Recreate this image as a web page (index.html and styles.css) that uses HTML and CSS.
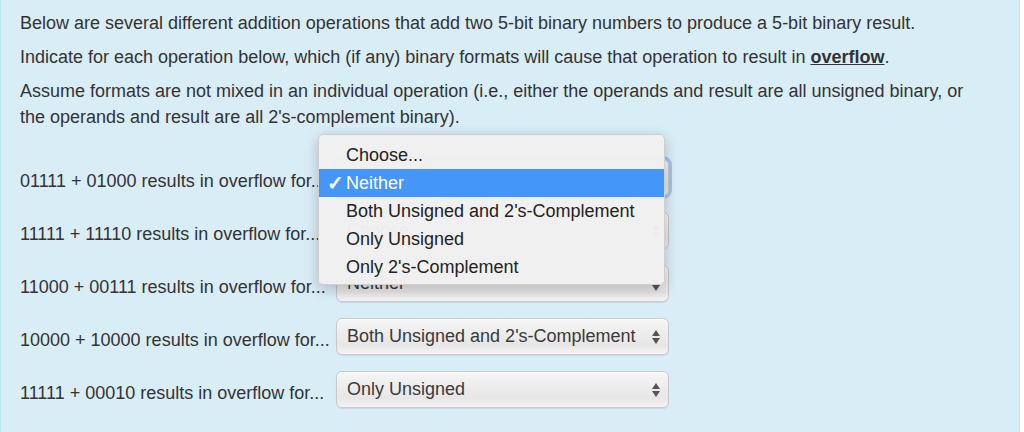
FILE: index.html
```html
<!DOCTYPE html>
<html>
<head>
<meta charset="utf-8">
<link rel="stylesheet" href="styles.css">
</head>
<body>
<div class="panel">
  <p>Below are several different addition operations that add two 5-bit binary numbers to produce a 5-bit binary result.</p>
  <p>Indicate for each operation below, which (if any) binary formats will cause that operation to result in <b class="u">overflow</b>.</p>
  <p>Assume formats are not mixed in an individual operation (i.e., either the operands and result are all unsigned binary, or the operands and result are all 2's-complement binary).</p>
  <div class="rows">
    <div class="row">
      <span class="label">01111 + 01000 results in overflow for...</span>
      <div class="select focus"><span>Neither</span><span class="arrows"><i class="up"></i><i class="down"></i></span></div>
    </div>
    <div class="row">
      <span class="label">11111 + 11110 results in overflow for...</span>
      <div class="select"><span>Choose...</span><span class="arrows"><i class="up"></i><i class="down"></i></span></div>
    </div>
    <div class="row">
      <span class="label">11000 + 00111 results in overflow for...</span>
      <div class="select"><span>Neither</span><span class="arrows"><i class="up"></i><i class="down"></i></span></div>
    </div>
    <div class="row">
      <span class="label">10000 + 10000 results in overflow for...</span>
      <div class="select"><span>Both Unsigned and 2's-Complement</span><span class="arrows"><i class="up"></i><i class="down"></i></span></div>
    </div>
    <div class="row">
      <span class="label">11111 + 00010 results in overflow for...</span>
      <div class="select"><span>Only Unsigned</span><span class="arrows"><i class="up"></i><i class="down"></i></span></div>
    </div>
  </div>
  <ul class="menu">
    <li>Choose...</li>
    <li class="sel"><span class="check">✓</span>Neither</li>
    <li>Both Unsigned and 2's-Complement</li>
    <li>Only Unsigned</li>
    <li>Only 2's-Complement</li>
  </ul>
</div>
</body>
</html>
```
FILE: styles.css
```css
html, body {
  margin: 0;
  padding: 0;
  background: #ffffff;
}
body {
  font-family: "Liberation Sans", Arial, sans-serif;
  font-size: 18px;
  color: #333333;
}
.panel {
  position: relative;
  height: 432px;
  box-sizing: border-box;
  width: 1020px;
  padding: 10px 44px 0 19px;
  background: #d9edf7;
  border-left: 1px solid #bce8f1;
  border-right: 1px solid #bce8f1;
}
p {
  margin: 0 0 8px 0;
  line-height: 26px;
}
.u {
  text-decoration: underline;
}
.rows {
  display: flex;
  flex-direction: column;
  gap: 16px;
  padding-top: 21px;
}
.row {
  display: flex;
  align-items: center;
  height: 37px;
}
.label {
  width: 316px;
  flex: none;
  white-space: nowrap;
  padding-top: 8px;
}
.select {
  position: relative;
  flex: none;
  box-sizing: border-box;
  width: 333px;
  height: 37px;
  border: 1px solid #c9c9c9;
  border-radius: 6px;
  background: linear-gradient(#f6f6f6 0%, #ececec 45%, #e6e6e6 75%, #f4f4f4 100%);
  box-shadow: inset 0 1px 0 #ffffff, 0 1px 1px rgba(0,0,0,0.08);
  display: flex;
  align-items: center;
  justify-content: space-between;
  padding: 0 8px 0 10px;
  color: #3a3a3a;
}
.select.focus {
  box-shadow: 0 0 0 3px rgba(100, 165, 240, 0.55);
}
.arrows {
  display: flex;
  flex-direction: column;
  gap: 2px;
  align-items: center;
}
.arrows i {
  display: block;
  width: 0;
  height: 0;
  border-left: 4px solid transparent;
  border-right: 4px solid transparent;
}
.arrows .up {
  border-bottom: 6px solid #555555;
}
.arrows .down {
  border-top: 6px solid #555555;
}
.menu {
  position: absolute;
  left: 317px;
  top: 134px;
  width: 347px;
  margin: 0;
  padding: 6px 0 4px 0;
  list-style: none;
  background: rgba(240, 240, 240, 0.98);
  border: 1px solid #cfcfcf;
  border-radius: 5px;
  box-shadow: 0 4px 14px rgba(0,0,0,0.22);
  box-sizing: border-box;
  height: 151px;
  color: #222222;
}
.menu li {
  position: relative;
  height: 28px;
  line-height: 28px;
  padding-left: 27px;
}
.menu li.sel {
  background: #4596f9;
  color: #ffffff;
}
.check {
  position: absolute;
  left: 8px;
  top: 0;
  font-size: 20px;
  font-weight: bold;
}
```
